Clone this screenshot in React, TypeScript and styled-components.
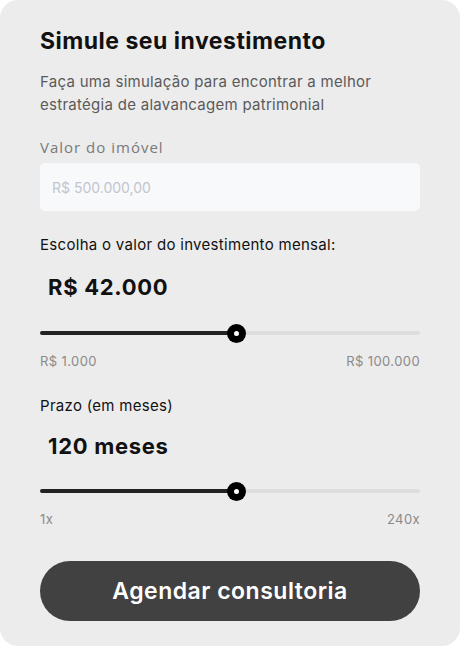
import React from "react";
import styled, { createGlobalStyle } from "styled-components";

const Global = createGlobalStyle`
  html, body { margin: 0; padding: 0; background: #ffffff; }
  body { font-family: Inter, "Noto Sans", sans-serif; }
  * { box-sizing: border-box; }
`;

const Card = styled.div`
  width: 460px;
  height: 646px;
  background: #ececec;
  border-radius: 18px;
  padding: 26px 40px 0 40px;
  display: flex;
  flex-direction: column;
`;

const Title = styled.h1`
  margin: 0;
  font-size: 23px;
  font-weight: 700;
  color: #111;
  line-height: 30px;
  letter-spacing: 0.5px;
`;

const Subtitle = styled.p`
  margin: 14px 0 0 0;
  font-size: 15px;
  line-height: 23px;
  color: #5a5a5a;
  letter-spacing: 0.28px;
`;

const FieldLabel = styled.label`
  margin-top: 21px;
  font-family: "Open Sans", sans-serif;
  font-size: 15px;
  line-height: 20px;
  color: #7a7a7a;
  letter-spacing: 1px;
`;

const Input = styled.input`
  margin-top: 6px;
  height: 48px;
  width: 100%;
  border: none;
  outline: none;
  border-radius: 5px;
  background: #f8f9fb;
  padding: 0 12px;
  font-family: Inter, sans-serif;
  font-size: 14px;
  color: #333;
  &::placeholder { color: #c2c5cf; }
`;

const SectionLabel = styled.div<{ $mt: number }>`
  margin-top: ${(p) => p.$mt}px;
  font-size: 15px;
  line-height: 20px;
  color: #111;
  letter-spacing: 0.3px;
`;

const BigValue = styled.div<{ $mt: number }>`
  margin-top: ${(p) => p.$mt}px;
  padding-left: 8px;
  font-size: 22px;
  font-weight: 700;
  line-height: 30px;
  color: #111;
  letter-spacing: 0.7px;
`;

const SliderWrap = styled.div<{ $mt: number }>`
  margin-top: ${(p) => p.$mt}px;
  position: relative;
  height: 20px;
  display: flex;
  align-items: center;
`;

const Track = styled.div`
  width: 100%;
  height: 4px;
  border-radius: 2px;
  background: #dddddd;
  position: relative;
`;

const Fill = styled.div`
  position: absolute;
  left: 0;
  top: 0;
  bottom: 0;
  background: #222;
  border-radius: 2px;
`;

const Thumb = styled.div`
  position: absolute;
  top: 50%;
  width: 19px;
  height: 19px;
  margin-left: -9.5px;
  margin-top: -9.5px;
  border-radius: 50%;
  background: #000;
  display: flex;
  align-items: center;
  justify-content: center;
  &::after {
    content: "";
    width: 5px;
    height: 5px;
    border-radius: 50%;
    background: #fff;
  }
`;

const Range = styled.div`
  margin-top: 9px;
  display: flex;
  justify-content: space-between;
  font-size: 13px;
  line-height: 18px;
  color: #8a8a8a;
  letter-spacing: 0.4px;
`;

const Button = styled.button`
  margin-top: 33px;
  height: 60px;
  width: 100%;
  border: none;
  border-radius: 30px;
  background: #414141;
  color: #fff;
  font-family: Inter, sans-serif;
  font-size: 23px;
  font-weight: 600;
  letter-spacing: 0.5px;
`;

const Slider = ({ pct, mt }: { pct: number; mt: number }) => (
  <SliderWrap $mt={mt}>
    <Track>
      <Fill style={{ width: `${pct}%` }} />
      <Thumb style={{ left: `${pct}%` }} />
    </Track>
  </SliderWrap>
);

export default function App() {
  const pct = (196 / 380) * 100;
  return (
    <>
      <Global />
      <Card>
        <Title>Simule seu investimento</Title>
        <Subtitle>
          Faça uma simulação para encontrar a melhor estratégia de alavancagem patrimonial
        </Subtitle>
        <FieldLabel>Valor do imóvel</FieldLabel>
        <Input placeholder="R$ 500.000,00" />
        <SectionLabel $mt={24}>Escolha o valor do investimento mensal:</SectionLabel>
        <BigValue $mt={17}>R$ 42.000</BigValue>
        <Slider pct={pct} mt={21} />
        <Range>
          <span>R$ 1.000</span>
          <span>R$ 100.000</span>
        </Range>
        <SectionLabel $mt={26}>Prazo (em meses)</SectionLabel>
        <BigValue $mt={15}>120 meses</BigValue>
        <Slider pct={pct} mt={20} />
        <Range>
          <span>1x</span>
          <span>240x</span>
        </Range>
        <Button>Agendar consultoria</Button>
      </Card>
    </>
  );
}
